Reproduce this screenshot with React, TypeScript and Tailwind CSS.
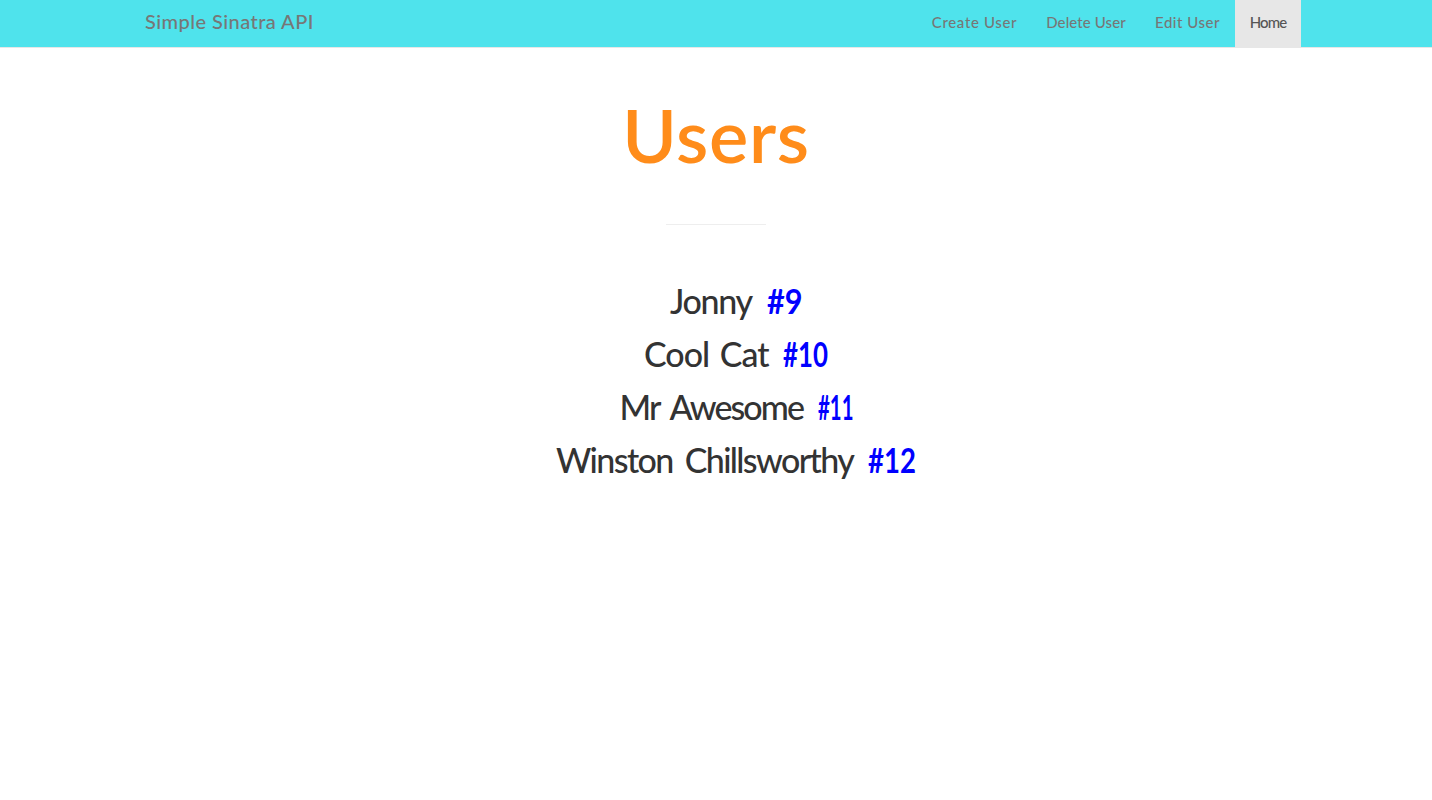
const links = [
  { label: "Create User", box: "w-[115px]", tracking: "tracking-[0.65px]" },
  { label: "Delete User", box: "w-[108px]", tracking: "tracking-[0.1px]" },
  { label: "Edit User", box: "w-[95px]", tracking: "tracking-[0.5px]" },
];

const users = [
  { name: "Jonny", id: 9, width: "w-[83px]", idWidth: "w-[35px]", tracking: "tracking-[-1.3px]", scale: "scale-x-[0.9]" },
  { name: "Cool Cat", id: 10, width: "w-[125px]", idWidth: "w-[45px]", tracking: "tracking-[-1px] [word-spacing:3px]", scale: "scale-x-[0.76]" },
  { name: "Mr Awesome", id: 11, width: "w-[184px]", idWidth: "w-[35px]", tracking: "tracking-[-1.9px] [word-spacing:5px]", scale: "scale-x-[0.6]" },
  { name: "Winston Chillsworthy", id: 12, width: "w-[298px]", idWidth: "w-[48px]", tracking: "tracking-[-1.6px] [word-spacing:5px]", scale: "scale-x-[0.81]" },
];

export default function App() {
  return (
    <div className="min-h-screen bg-white font-['Lato','Open_Sans',sans-serif] text-[#333]">
      <nav className="h-12 border-b border-[#e7e7e7] bg-[#4fe3ec]">
        <div className="mx-auto flex w-[1170px] justify-between">
          <a href="#" className="pl-[14px] text-[20px] leading-[42px] font-medium tracking-[0.45px] text-[#777]">
            Simple Sinatra API
          </a>
          <ul className="flex text-[15px] leading-[44px] font-medium text-[#777]">
            {links.map((link) => (
              <li key={link.label} className={`${link.box} text-center whitespace-nowrap`}>
                <a href="#" className={link.tracking}>{link.label}</a>
              </li>
            ))}
            <li className="h-12 w-[66px] bg-[#e7e7e7] text-center text-[#555]">
              <a href="#" className="tracking-[-0.9px]">Home</a>
            </li>
          </ul>
        </div>
      </nav>
      <main>
        <h1 className="pt-[42px] text-center text-[74px] leading-[90px] font-semibold tracking-[0.7px] text-[#ff8c1a]">Users</h1>
        <hr className="mx-auto mt-11 w-[100px] border-t border-[#eee]" />
        <ul className="mt-[49px] pl-10 text-[34px] leading-[53px] font-medium">
          {users.map((user) => (
            <li key={user.id} className="flex h-[53px] justify-center gap-[14px] whitespace-nowrap">
              <span className={`${user.width} ${user.tracking}`}>{user.name}</span>
              <span className={`${user.idWidth} font-bold text-[#00f]`}>
                <span className={`inline-block origin-left ${user.scale}`}>#{user.id}</span>
              </span>
            </li>
          ))}
        </ul>
      </main>
    </div>
  );
}
